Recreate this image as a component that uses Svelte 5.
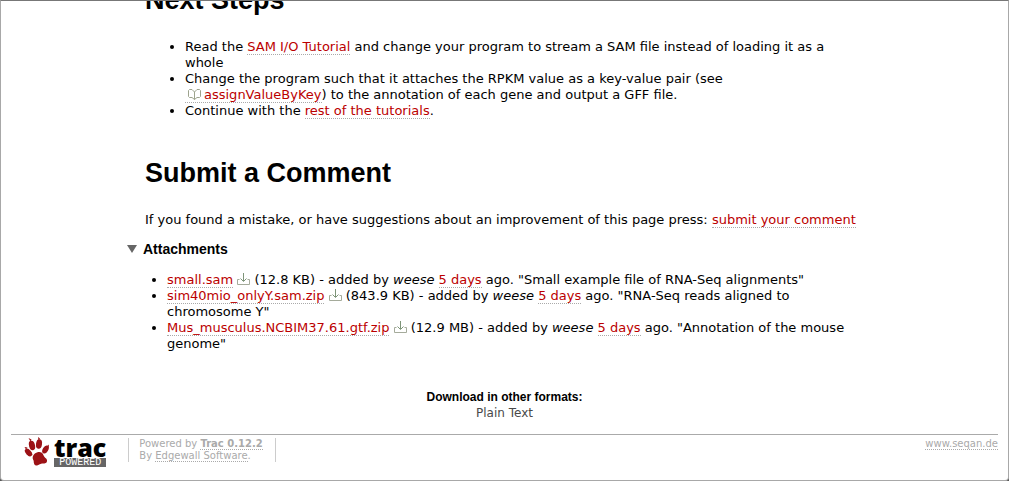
<script>
  const attachments = [
    { name: 'small.sam', size: '12.8 KB', author: 'weese', age: '5 days', note: 'Small example file of RNA-Seq alignments' },
    { name: 'sim40mio_onlyY.sam.zip', size: '843.9 KB', author: 'weese', age: '5 days', note: 'RNA-Seq reads aligned to chromosome Y' },
    { name: 'Mus_musculus.NCBIM37.61.gtf.zip', size: '12.9 MB', author: 'weese', age: '5 days', note: 'Annotation of the mouse genome' }
  ];
  let open = $state(true);
</script>

<div class="window">
  <main>
    <h1 class="first">Next Steps</h1>
    <ul class="steps">
      <li>Read the <a href="#sam">SAM I/O Tutorial</a> and change your program to stream a SAM file instead of loading it as a whole</li>
      <li>Change the program such that it attaches the RPKM value as a key-value pair (see <a class="api" href="#assign"><svg class="book" width="13" height="11" viewBox="0 0 13 11" aria-hidden="true"><path d="M6.500 10.500V3L4 .5H1.500l-1 1v6l1 1H4l2.500 2L9 8.500h2.500l1-1v-6l-1-1H9L6.500 3" /></svg>assignValueByKey</a>) to the annotation of each gene and output a GFF file.</li>
      <li>Continue with the <a href="#rest">rest of the tutorials</a>.</li>
    </ul>

    <h1>Submit a Comment</h1>
    <p>If you found a mistake, or have suggestions about an improvement of this page press: <a href="#comment">submit your comment</a></p>

    <section>
      <h2>
        <button type="button" aria-expanded={open} onclick={() => (open = !open)}>
          <svg class:closed={!open} width="10" height="8" viewBox="0 0 10 8" aria-hidden="true"><path d="M0 0h10L5 8z" /></svg>
          Attachments
        </button>
      </h2>
      {#if open}
        <ul class="files">
          {#each attachments as file}
            <li>
              <a href="#{file.name}">{file.name}</a>
              <a class="raw" href="#raw-{file.name}" aria-label="Download {file.name}"><svg width="13" height="12" viewBox="0 0 13 12" aria-hidden="true"><path class="tray" d="M2.500 6.500h-2v5h12v-5h-2" /><path class="arrow" d="M6.500 0v8M3.500 5.500l3 3 3-3" /></svg></a>
              ({file.size}) - added by <em>{file.author}</em> <a href="#timeline">{file.age}</a> ago. "{file.note}"
            </li>
          {/each}
        </ul>
      {/if}
    </section>
  </main>

  <div class="formats">
    <h3>Download in other formats:</h3>
    <a href="#plain">Plain Text</a>
  </div>

  <footer>
    <a class="logo" href="#trac" aria-label="Trac Powered">
      <svg class="paw" width="26" height="30" viewBox="0 0 26 30" aria-hidden="true">
        <path d="M4.500 1l3 1.500-1 2zM14 0l2 1.500-1.500 2zM25 7.500l-.5 3-2-1zM.5 10l3 .5-1.500 2z" />
        <ellipse cx="8" cy="8.500" rx="3" ry="4.800" transform="rotate(-14 8 8.500)" />
        <ellipse cx="15" cy="7" rx="3" ry="4.800" transform="rotate(8 15 7)" />
        <ellipse cx="4.500" cy="15.500" rx="2.700" ry="4.500" transform="rotate(-42 4.500 15.500)" />
        <ellipse cx="21.500" cy="12.500" rx="2.700" ry="4.300" transform="rotate(32 21.500 12.500)" />
        <path d="M13 15.500c3-1 5.500 0 6.500 2.800s4 3.200 3.500 6c-.5 2.700-3 2-5 2.200-2.500.3-3.500 2.300-6 2-2-.3-2.300-2.800-2.300-4.300 0-1.300-1.300-2-1-4.200.3-2.200 2.500-4 4.300-4.500z" />
      </svg>
      <span class="brand"><b>trac</b><small>POWERED</small></span>
    </a>
    <p class="left">Powered by <a href="#about"><strong>Trac 0.12.2</strong></a><br />By <a href="#edgewall">Edgewall Software</a>.</p>
    <p class="right"><a href="#seqan">www.seqan.de</a></p>
  </footer>
</div>

<style>
  :global(body) {
    margin: 0;
    background: #555;
    overflow: hidden;
  }
  .window {
    box-sizing: border-box;
    min-height: 100vh;
    overflow: hidden;
    border: 1px solid #a8a8a8;
    border-top-color: #777;
    border-radius: 0 0 4px 4px;
    padding: 0 10px;
    background: #fff;
    font: 13px/16px Verdana, "DejaVu Sans", sans-serif;
    color: #000;
  }
  main {
    margin: 0 140px 0 134px;
  }
  h1, h2, h3 {
    font-family: "Liberation Sans", Arial, sans-serif;
    font-weight: bold;
  }
  h1 {
    margin: 37px 0 22px;
    font-size: 27px;
    line-height: 34px;
  }
  h1.first {
    margin-top: -18px;
  }
  a {
    color: #b00;
    text-decoration: none;
    border-bottom: 1px dotted #aaa;
  }
  ul {
    margin: 0;
    padding-left: 40px;
  }
  p {
    margin: 0;
  }
  .api {
    white-space: nowrap;
  }
  .book {
    margin: 0 3px;
    vertical-align: -1px;
    fill: none;
    stroke: #9da38d;
  }
  h2 {
    margin: 13px 0 15px -18px;
    font-size: 14px;
    line-height: 16px;
  }
  button {
    display: flex;
    align-items: center;
    gap: 6px;
    border: 0;
    padding: 0;
    background: none;
    color: inherit;
    font: inherit;
    cursor: pointer;
  }
  button svg {
    fill: #666;
  }
  .closed {
    transform: rotate(-90deg);
  }
  .files {
    padding-left: 22px;
  }
  .raw {
    border: 0;
  }
  .raw svg {
    fill: none;
    vertical-align: -1px;
  }
  .tray {
    stroke: #a5ab9b;
  }
  .arrow {
    stroke: #7d9478;
  }
  .formats {
    margin: 37px 0 13px;
    text-align: center;
    font-size: 12px;
  }
  h3 {
    margin: 0;
    font-size: 12px;
    line-height: 16px;
  }
  .formats a {
    border: 0;
    color: #494949;
  }
  footer {
    display: flex;
    align-items: flex-start;
    border-top: 1px solid #aaa;
    font-size: 10px;
    line-height: 12px;
    color: #aaa;
  }
  footer p a {
    color: #aaa;
  }
  .logo {
    display: flex;
    gap: 4px;
    margin: 2px 22px 0 13px;
    border: 0;
  }
  .paw {
    fill: #9c1216;
  }
  .brand {
    display: flex;
    flex-direction: column;
    color: #000;
  }
  .brand b {
    font: 800 25px/21px "Open Sans", sans-serif;
  }
  .brand small {
    background: #666;
    color: #fff;
    font: 10px/9px "Liberation Mono", monospace;
    text-align: center;
  }
  .left {
    margin-top: 3px;
    padding: 0 12px 0 10px;
    border: solid #ccc;
    border-width: 0 1px;
  }
  .right {
    margin: 3px 0 0 auto;
  }
</style>
